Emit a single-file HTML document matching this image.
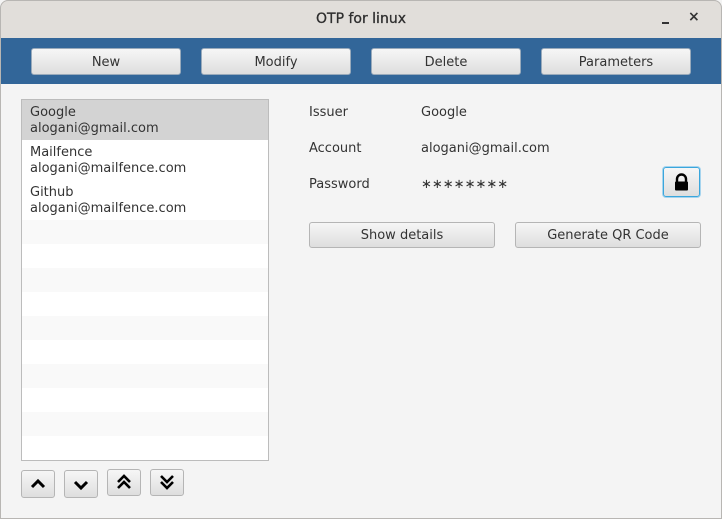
<!DOCTYPE html>
<html><head><style>
*{margin:0;padding:0;box-sizing:border-box}
body{width:722px;height:519px;background:#f4f4f4;font-family:"DejaVu Sans",sans-serif;font-size:13px;color:#333;position:relative;overflow:hidden}
.win{position:absolute;left:0;top:0;width:722px;height:519px;border-radius:8px 8px 0 0;overflow:hidden;background:#f4f4f4}
.frame{position:absolute;left:0;top:0;width:722px;height:519px;border:1px solid #b8b6b3;border-radius:8px 8px 0 0;pointer-events:none}
.title{position:absolute;left:0;top:0;width:722px;height:38px;background:#e1deda;text-align:center;line-height:38px;font-size:14px;color:#2e2e2e;-webkit-text-stroke:0.3px #2e2e2e}
.band{position:absolute;left:0;top:38px;width:722px;height:46px;background:#326699}
.b{position:absolute;border:1px solid #b5b5b5;border-radius:3px;background:linear-gradient(#f6f6f6,#dedede);text-align:center;color:#333}
.band .b{top:10px;height:27px;width:150px;line-height:27px;border-color:#9ab}
.list{position:absolute;left:21px;top:99px;width:248px;height:362px;border:1px solid #bcbcbc;background:#fff}
.row{position:absolute;left:0;width:246px;padding-left:8px;line-height:16px}
.s{position:absolute;left:0;width:246px;height:24px;background:#f9f9f9}
.lbl{position:absolute;left:309px}
.val{position:absolute;left:421px}
</style></head><body><div class="win">
<div class="title">OTP for linux</div>
<div style="position:absolute;left:662px;top:22px;width:7px;height:2px;background:#333"></div>
<div style="position:absolute;left:688px;top:9px;font-size:14px;font-weight:bold;color:#333">×</div>
<div class="band">
<div class="b" style="left:31px">New</div>
<div class="b" style="left:201px">Modify</div>
<div class="b" style="left:371px">Delete</div>
<div class="b" style="left:541px">Parameters</div>
</div>
<div class="list">
<div class="row" style="top:0;height:40px;background:#d3d3d3;padding-top:5px">Google<br>alogani@gmail.com</div>
<div class="row" style="top:40px;height:40px;padding-top:5px">Mailfence<br>alogani@mailfence.com</div>
<div class="row" style="top:80px;height:40px;padding-top:5px">Github<br>alogani@mailfence.com</div>
<div class="s" style="top:120px"></div><div class="s" style="top:168px"></div><div class="s" style="top:216px"></div><div class="s" style="top:264px"></div><div class="s" style="top:312px"></div>
</div>
<div class="b" style="left:21px;top:470px;width:34px;height:28px"><svg width="32" height="26"><path d="M10 16l6-6 6 6" stroke="#000" stroke-width="3" fill="none"/></svg></div>
<div class="b" style="left:64px;top:470px;width:34px;height:28px"><svg width="32" height="26"><path d="M10 11l6 6 6-6" stroke="#000" stroke-width="3" fill="none"/></svg></div>
<div class="b" style="left:107px;top:469px;width:34px;height:27px"><svg width="32" height="25"><path d="M10 12l6-6 6 6M10 18l6-6 6 6" stroke="#000" stroke-width="2.6" fill="none"/></svg></div>
<div class="b" style="left:150px;top:469px;width:34px;height:27px"><svg width="32" height="25"><path d="M10 6l6 6 6-6M10 12l6 6 6-6" stroke="#000" stroke-width="2.6" fill="none"/></svg></div>
<div class="lbl" style="top:105px">Issuer</div><div class="val" style="top:105px">Google</div>
<div class="lbl" style="top:141px">Account</div><div class="val" style="top:141px">alogani@gmail.com</div>
<div class="lbl" style="top:177px">Password</div><div class="val" style="top:177px;font-size:13px;letter-spacing:0">∗∗∗∗∗∗∗∗</div>
<div class="b" style="left:663px;top:167px;width:37px;height:30px;border-color:#3aa6dc;box-shadow:0 0 0 1px #a6d4ee"><svg width="35" height="28"><path d="M13 14v-3a4 4 0 0 1 9 0v3" stroke="#000" stroke-width="2.4" fill="none"/><rect x="11" y="13.5" width="13" height="9" rx="1" fill="#000"/></svg></div>
<div class="b" style="left:309px;top:222px;width:186px;height:26px;line-height:26px">Show details</div>
<div class="b" style="left:515px;top:222px;width:186px;height:26px;line-height:26px">Generate QR Code</div>
</div><div class="frame"></div></body></html>
